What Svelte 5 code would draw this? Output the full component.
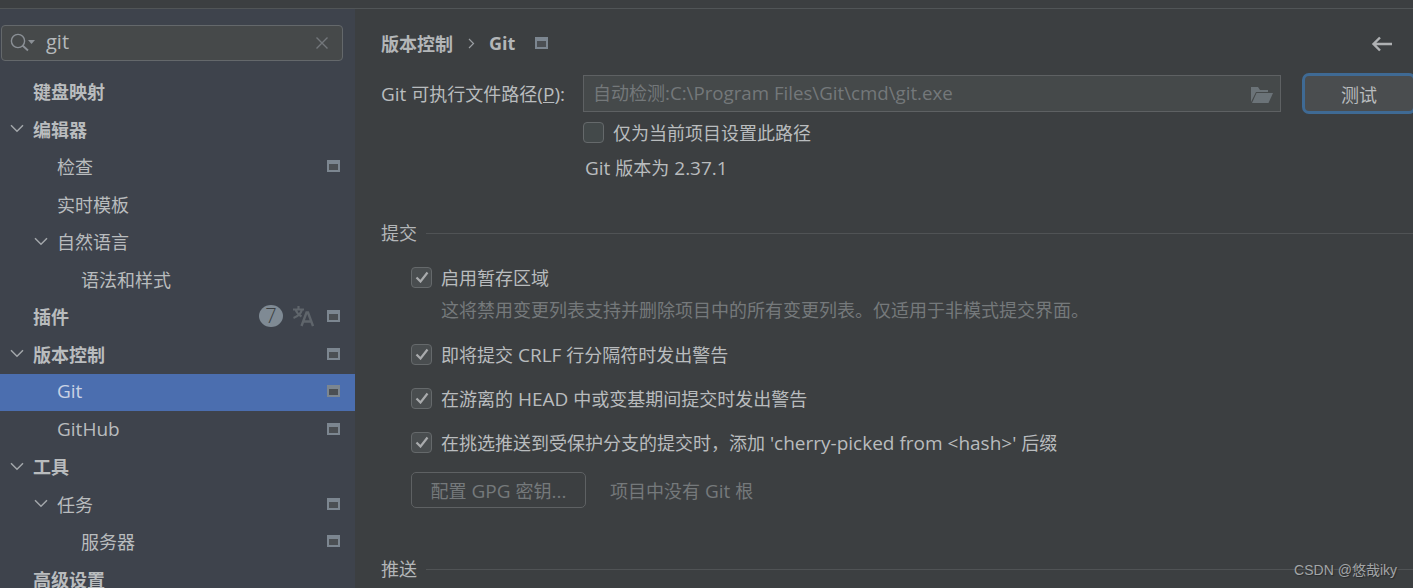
<script>
  const tree = [
    { label: '键盘映射', level: 0, bold: true },
    { label: '编辑器', level: 0, bold: true, arrow: true },
    { label: '检查', level: 1, page: true },
    { label: '实时模板', level: 1 },
    { label: '自然语言', level: 1, arrow: true },
    { label: '语法和样式', level: 2 },
    { label: '插件', level: 0, bold: true, page: true, extras: true },
    { label: '版本控制', level: 0, bold: true, arrow: true, page: true },
    { label: 'Git', level: 1, page: true, selected: true },
    { label: 'GitHub', level: 1, page: true },
    { label: '工具', level: 0, bold: true, arrow: true },
    { label: '任务', level: 1, arrow: true, page: true },
    { label: '服务器', level: 2, page: true },
    { label: '高级设置', level: 0, bold: true }
  ];
  const checks = [
    { label: '启用暂存区域', hint: '这将禁用变更列表支持并删除项目中的所有变更列表。仅适用于非模式提交界面。' },
    { label: '即将提交 CRLF 行分隔符时发出警告' },
    { label: '在游离的 HEAD 中或变基期间提交时发出警告' },
    { label: "在挑选推送到受保护分支的提交时，添加 'cherry-picked from <hash>' 后缀" }
  ];
  // Latin runs sit slightly larger than the CJK around them
  const parts = (text) => text.split(/([\x20-\x7e]+)/).filter(Boolean).map((t) => ({ t, lat: /^[\x20-\x7e]/.test(t) }));
</script>

{#snippet mixed(text)}
  {#each parts(text) as p}{#if p.lat}<span class="lat">{p.t}</span>{:else}{p.t}{/if}{/each}
{/snippet}

{#snippet pageIcon()}
  <svg class="page-icon" width="13" height="12" viewBox="0 0 13 12">
    <path fill="#7c8690" fill-rule="evenodd" d="M0 0h13v12H0zM2 4v6h9V4z" />
    <rect x="2" y="4" width="9" height="6" fill="#4b4f53" />
  </svg>
{/snippet}

<div class="window">
  <div class="top"></div>
  <div class="body">
    <aside class="side">
      <div class="search">
        <svg class="loupe" width="26" height="20" viewBox="0 0 26 20">
          <circle cx="8" cy="8" r="6.6" fill="none" stroke="#8b9096" stroke-width="1.4" />
          <path d="M12.500 12.500l5.500 5" stroke="#8b9096" stroke-width="1.800" fill="none" />
          <path d="M18 7h7l-3.500 4z" fill="#8b9096" />
        </svg>
        <span class="query">git</span>
        <svg class="clear" width="12" height="12" viewBox="0 0 12 12">
          <path d="M.5.5l11 11M11.500.5l-11 11" stroke="#73777b" stroke-width="1.400" fill="none" />
        </svg>
      </div>
      <div class="tree">
        {#each tree as row}
          <div class="row l{row.level}" class:bold={row.bold} class:selected={row.selected}>
            {#if row.arrow}
              <svg class="chev" width="14" height="9" viewBox="0 0 14 9">
                <path d="M1 1.200l6 6 6-6" stroke="#a3a7ab" stroke-width="1.500" fill="none" />
              </svg>
            {/if}
            <span class="lbl">{@render mixed(row.label)}</span>
            {#if row.extras}
              <span class="badge">7</span>
              <svg class="xlate" width="22" height="22" viewBox="0 0 22 22">
                <path d="M1 4.500h11M6.500 1v3.500M10 4.500c-1 4-4.500 7-8.500 8.500M3.500 4.500c1 3 3.500 5.500 6 7" stroke="#5f656b" stroke-width="2.200" fill="none" />
                <path d="M9.500 21l5-13.500h1.500l5 13.500M11.500 16.500h8" stroke="#5f656b" stroke-width="2.400" fill="none" />
              </svg>
            {/if}
            {#if row.page}
              <span class="page">{@render pageIcon()}</span>
            {/if}
          </div>
        {/each}
      </div>
    </aside>

    <main class="main">
      <header class="crumbs">
        <b>版本控制</b>
        <svg class="sep" width="7" height="11" viewBox="0 0 7 11">
          <path d="M1 1l4.500 4.500L1 10" stroke="#9a9ea2" stroke-width="1.200" fill="none" />
        </svg>
        <b>Git</b>
        {@render pageIcon()}
        <svg class="back" width="22" height="16" viewBox="0 0 22 16">
          <path d="M21 8H3M9 1.500L2.500 8 9 14.500" stroke="#afb1b3" stroke-width="2.400" fill="none" />
        </svg>
      </header>

      <div class="path-row">
        <span class="path-label"><span class="lat">{'Git '}</span>可执行文件路径<span class="lat">(<u>P</u>):</span></span>
        <div class="path-input">
          <span>{@render mixed('自动检测:C:\\Program Files\\Git\\cmd\\git.exe')}</span>
          <svg width="23" height="18" viewBox="0 0 23 18">
            <path d="M1 17V2h7l2 3h8v2H6L1 17z" fill="#6b7378" />
            <path d="M6.500 8H23l-4.500 10H2z" fill="#6b7378" />
          </svg>
        </div>
        <button class="test">测试</button>
      </div>

      <label class="only">
        <span class="box"></span>
        <span>仅为当前项目设置此路径</span>
      </label>
      <div class="version">{@render mixed('Git 版本为 2.37.1')}</div>

      <div class="section first"><span>提交</span><i></i></div>

      <div class="checks">
        {#each checks as c}
          <div class="check">
            <span class="box on">
              <svg width="14" height="12" viewBox="0 0 14 12">
                <path d="M1.500 6.500L5.500 10.500 12.500 1.500" stroke="#a9abad" stroke-width="2.200" fill="none" />
              </svg>
            </span>
            <span>{@render mixed(c.label)}</span>
          </div>
          {#if c.hint}<div class="hint">{c.hint}</div>{/if}
        {/each}
      </div>

      <div class="gpg">
        <button class="gpg-btn">{@render mixed('配置 GPG 密钥...')}</button>
        <span>{@render mixed('项目中没有 Git 根')}</span>
      </div>

      <div class="section"><span>推送</span><i></i></div>
    </main>
  </div>
  <div class="mark">CSDN @悠哉iky</div>
</div>

<style>
  :global(body) {
    margin: 0;
    background: #3c3f41;
  }
  .window {
    position: relative;
    width: 1413px;
    height: 588px;
    overflow: hidden;
    display: flex;
    flex-direction: column;
    font-family: "Open Sans", "Noto Sans CJK SC", sans-serif;
    font-size: 18px;
    color: #b9bcbe;
  }
  .lat {
    font-size: 19px;
    line-height: 1;
  }
  .top {
    height: 8px;
    flex: none;
    background: #3c3f41;
    border-bottom: 1px solid #515557;
  }
  .body {
    display: flex;
    flex: 1;
    min-height: 0;
  }
  .side {
    width: 355px;
    flex: none;
    background: #3e434c;
    padding-top: 16px;
    box-sizing: border-box;
  }
  .search {
    margin-left: 1px;
    width: 342px;
    height: 36px;
    box-sizing: border-box;
    border: 1px solid #64686b;
    border-radius: 4px;
    background: #46494a;
    display: flex;
    align-items: center;
    padding: 0 14px 0 8px;
  }
  .loupe { flex: none; }
  .query {
    margin-left: 10px;
    flex: 1;
    font-size: 20px;
    color: #b5b8ba;
    line-height: 1;
    padding-bottom: 2px;
  }
  .tree {
    margin-top: 12.5px;
  }
  .row {
    position: relative;
    height: 37.5px;
    display: flex;
    align-items: center;
    padding: 0 15px 2px 0;
    box-sizing: border-box;
    white-space: nowrap;
  }
  .row.l0 { padding-left: 33px; }
  .row.l1 { padding-left: 57px; }
  .row.l2 { padding-left: 81px; }
  .bold { font-weight: 700; }
  .selected { background: #4b6eaf; color: #c9d2e4; }
  .chev {
    position: absolute;
    top: 13px;
  }
  .l0 .chev { left: 10px; }
  .l1 .chev { left: 34px; }
  .lbl { flex: 1; }
  .page { display: flex; margin-left: 7px; }
  .page-icon { flex: none; }
  .badge {
    width: 24px;
    height: 22px;
    border-radius: 50%;
    background: #7f8a94;
    color: #3c3f41;
    font-size: 20px;
    font-weight: 300;
    line-height: 22px;
    text-align: center;
    margin-right: 9px;
    margin-left: -1px;
  }
  .xlate { margin-right: 6px; }

  .main {
    flex: 1;
    min-width: 0;
    padding: 16px 0 0 26px;
    box-sizing: border-box;
  }
  .crumbs {
    height: 36px;
    display: flex;
    align-items: center;
    padding-right: 20px;
    color: #b3b6b8;
  }
  .crumbs b { font-weight: 700; }
  .sep { margin: 0 14px 0 15px; }
  .crumbs .page-icon { margin-left: 20px; }
  .back { margin-left: auto; margin-top: 1px; }
  .path-row {
    display: flex;
    align-items: center;
    margin-top: 14px;
    height: 37px;
    width: 1032px;
  }
  .path-label {
    width: 202px;
    flex: none;
    white-space: pre;
    padding-bottom: 2px;
  }
  .path-input {
    width: 698px;
    height: 37px;
    flex: none;
    box-sizing: border-box;
    border: 1px solid #5e6163;
    background: #45494a;
    display: flex;
    align-items: center;
    justify-content: space-between;
    padding: 0 7px 0 9px;
    color: #74787a;
    white-space: nowrap;
  }
  .path-input > span { padding-bottom: 3px; }
  .path-input .lat { font-size: 18.7px; }
  .test {
    margin-left: 21px;
    flex: none;
    width: 114px;
    height: 41px;
    box-sizing: border-box;
    border: 3px solid #3f6a94;
    border-radius: 7px;
    background: #4a4d4f;
    color: #b9bcbe;
    font: inherit;
    padding: 0;
  }
  .box {
    width: 21px;
    height: 21px;
    flex: none;
    box-sizing: border-box;
    border: 1px solid #65696b;
    border-radius: 4px;
    background: #43494a;
    display: flex;
    align-items: center;
    justify-content: center;
  }
  .box.on { background: #494d4f; }
  .only {
    display: flex;
    align-items: center;
    gap: 9px;
    margin: 8px 0 0 202px;
    height: 24px;
  }
  .version {
    margin: 12px 0 0 204px;
    height: 24px;
    line-height: 24px;
  }
  .section {
    display: flex;
    align-items: center;
    height: 26px;
    gap: 9px;
    color: #b3b6b8;
  }
  .section.first { margin-top: 39px; }
  .section i {
    flex: 1;
    height: 1px;
    margin-top: 2px;
    background: #505355;
  }
  .checks {
    margin: 19px 0 0 30px;
  }
  .check {
    display: flex;
    align-items: center;
    gap: 9px;
    height: 26px;
    white-space: nowrap;
    margin-bottom: 18px;
  }
  .hint {
    margin: -11px 0 18px 30px;
    height: 26px;
    line-height: 26px;
    color: #75797b;
    white-space: nowrap;
  }
  .gpg {
    margin: -1px 0 0 30px;
    display: flex;
    align-items: center;
    gap: 24px;
    color: #75797b;
  }
  .gpg-btn {
    width: 175px;
    height: 36px;
    box-sizing: border-box;
    border: 1px solid #5e6163;
    border-radius: 5px;
    background: #3c3f41;
    color: #75797b;
    font: inherit;
    padding: 0;
  }
  .gpg + .section { margin-top: 47px; }
  .mark {
    position: absolute;
    right: 16px;
    bottom: 9px;
    font-family: "Liberation Sans", "Noto Sans CJK SC", sans-serif;
    font-size: 14px;
    color: #a2a5a7;
    text-shadow: 1px 1px 1px #2a2c2d;
  }
</style>
